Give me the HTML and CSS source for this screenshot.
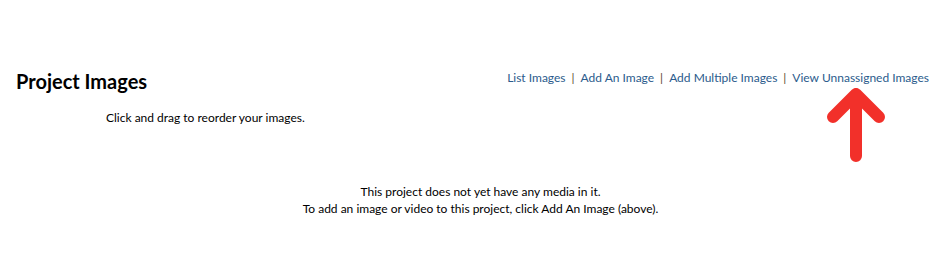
FILE: index.html
```html
<!DOCTYPE html>
<html>
<head>
<meta charset="utf-8">
<link rel="stylesheet" href="styles.css">
</head>
<body>
<div class="page">
  <div class="header">
    <h1 class="title">Project Images</h1>
    <nav class="links">
      <a href="#">List Images</a><span class="sep">|</span><a href="#">Add An Image</a><span class="sep">|</span><a href="#">Add Multiple Images</a><span class="sep">|</span><a href="#">View Unnassigned Images</a>
    </nav>
  </div>
  <p class="hint">Click and drag to reorder your images.</p>
  <div class="empty">
    <p>This project does not yet have any media in it.</p>
    <p>To add an image or video to this project, click Add An Image (above).</p>
  </div>
  <svg class="arrow" width="60" height="80" viewBox="0 0 60 80">
    <path d="M30 8 L30 70 M7 31 L30 8 L53 31" fill="none" stroke="#f2302a" stroke-width="12" stroke-linecap="round" stroke-linejoin="round"/>
  </svg>
</div>
</body>
</html>
```

FILE: styles.css
```css
html, body {
  margin: 0;
  padding: 0;
  background: #fff;
}
body {
  font-family: Lato, "Open Sans", sans-serif;
  color: #000;
  width: 948px;
  height: 269px;
  overflow: hidden;
}
.page {
  position: relative;
  padding: 68px 19px 0 16px;
}
.header {
  display: flex;
  justify-content: space-between;
  align-items: flex-end;
}
.title {
  margin: 0;
  font-size: 20px;
  font-weight: 700;
  line-height: 26px;
}
.links {
  font-size: 12px;
  line-height: 18px;
  padding-bottom: 7px;
}
.links a {
  color: #2b5b8c;
  text-decoration: none;
}
.sep {
  color: #5a4430;
  margin: 0 6px;
}
.hint {
  margin: 16px 0 0 90px;
  font-size: 12px;
  line-height: 16px;
}
.empty {
  margin-top: 57px;
  padding-left: 16px;
  text-align: center;
  font-size: 12px;
  line-height: 17px;
}
.empty p {
  margin: 0;
}
.arrow {
  position: absolute;
  left: 826px;
  top: 86px;
}
```
